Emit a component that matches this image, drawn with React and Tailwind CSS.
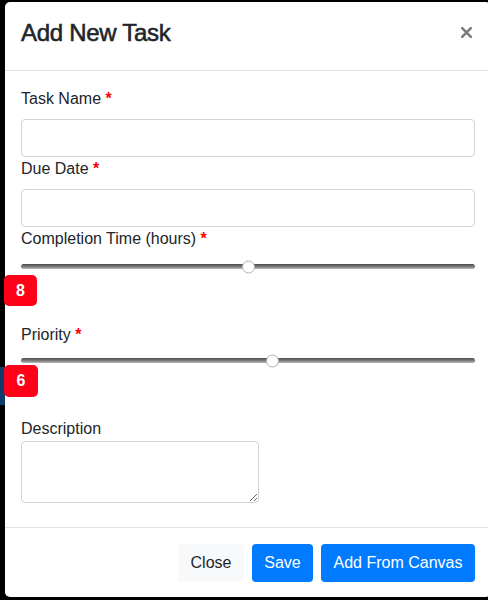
import React from "react";

function Slider({ fraction }) {
  return (
    <div className="relative h-[15px] flex items-center">
      <div className="w-full h-[5px] rounded-full bg-linear-to-b from-[#4b4b4b] via-[#7a7a7a] to-[#b9b9b9]" />
      <div
        className="absolute top-1/2 -translate-y-1/2 w-[13px] h-[13px] rounded-full bg-white border border-[#b3b3b3]"
        style={{ left: `calc(${fraction} * (100% - 13px))` }}
      />
    </div>
  );
}

function Label({ children, required, className = "" }) {
  return (
    <label className={"block text-[16px] leading-[24px] text-[#212529] " + className}>
      {children}
      {required && <span className="text-[#ff0000] font-bold"> *</span>}
    </label>
  );
}

export default function App() {
  return (
    <div
      className="relative w-[488px] h-[600px] overflow-hidden bg-black pt-[2px] pl-[5px]"
      style={{ fontFamily: '"Liberation Sans", Arial, sans-serif' }}
    >
      <div className="absolute left-0 top-[367px] w-[5px] h-[38px] bg-[#103c6c]" />
      <div className="relative w-[486px] h-[595px] bg-white rounded-[5px] flex flex-col">
        {/* header */}
        <div className="h-[69px] px-4 flex items-start justify-between border-b border-[#dee2e6]">
          <h4 className="pt-[13px] text-[24px] leading-[36px] text-[#212529] tracking-[-0.3px] [-webkit-text-stroke:0.55px_#212529]">
            Add New Task
          </h4>
          <svg className="mt-[25px] mr-[3px]" width="11" height="11" viewBox="0 0 11 11">
            <path d="M1.2 1.2 L9.8 9.8 M9.8 1.2 L1.2 9.8" stroke="#7b7b7b" strokeWidth="2.6" strokeLinecap="square" />
          </svg>
        </div>

        {/* body */}
        <div className="flex-1 px-4 pt-4 flex flex-col">
          <Label required className="mb-2">Task Name</Label>
          <input className="block w-full h-[38px] border border-[#ced4da] rounded-[4px] px-3 outline-none" />
          <Label required className="mb-2">Due Date</Label>
          <input className="block w-full h-[38px] border border-[#ced4da] rounded-[4px] px-3 outline-none" />
          <Label required>Completion Time (hours)</Label>
          <div className="mt-[8px]">
            <Slider fraction={0.5} />
          </div>
          <div className="mt-[1px] -ml-[17px] w-[33px] h-[31px] rounded-[5px] bg-[#ff0019] text-white font-bold text-[16px] flex items-center justify-center">
            8
          </div>
          <Label required className="mt-[17px]">Priority</Label>
          <div className="mt-[6px]">
            <Slider fraction={0.555} />
          </div>
          <div className="-mt-[3px] -ml-[17px] w-[34px] h-[32px] rounded-[5px] bg-[#ff0019] text-white font-bold text-[16px] flex items-center justify-center">
            6
          </div>
          <Label className="mt-[20px]">Description</Label>
          <textarea className="block w-[238px] h-[62px] border border-[#ced4da] rounded-[4px] outline-none" />
        </div>

        {/* footer */}
        <div className="h-[70px] border-t border-[#dee2e6] px-4 pt-4 flex items-start justify-end gap-2">
          <button className="w-[66px] h-[38px] rounded-[4px] bg-[#f8f9fa] text-[#212529] text-[16px] flex items-center justify-center">
            Close
          </button>
          <button className="w-[61px] h-[38px] rounded-[4px] bg-[#007bff] text-white text-[16px] flex items-center justify-center">
            Save
          </button>
          <button className="w-[154px] h-[38px] rounded-[4px] bg-[#007bff] text-white text-[16px] flex items-center justify-center">
            Add From Canvas
          </button>
        </div>
      </div>
    </div>
  );
}
